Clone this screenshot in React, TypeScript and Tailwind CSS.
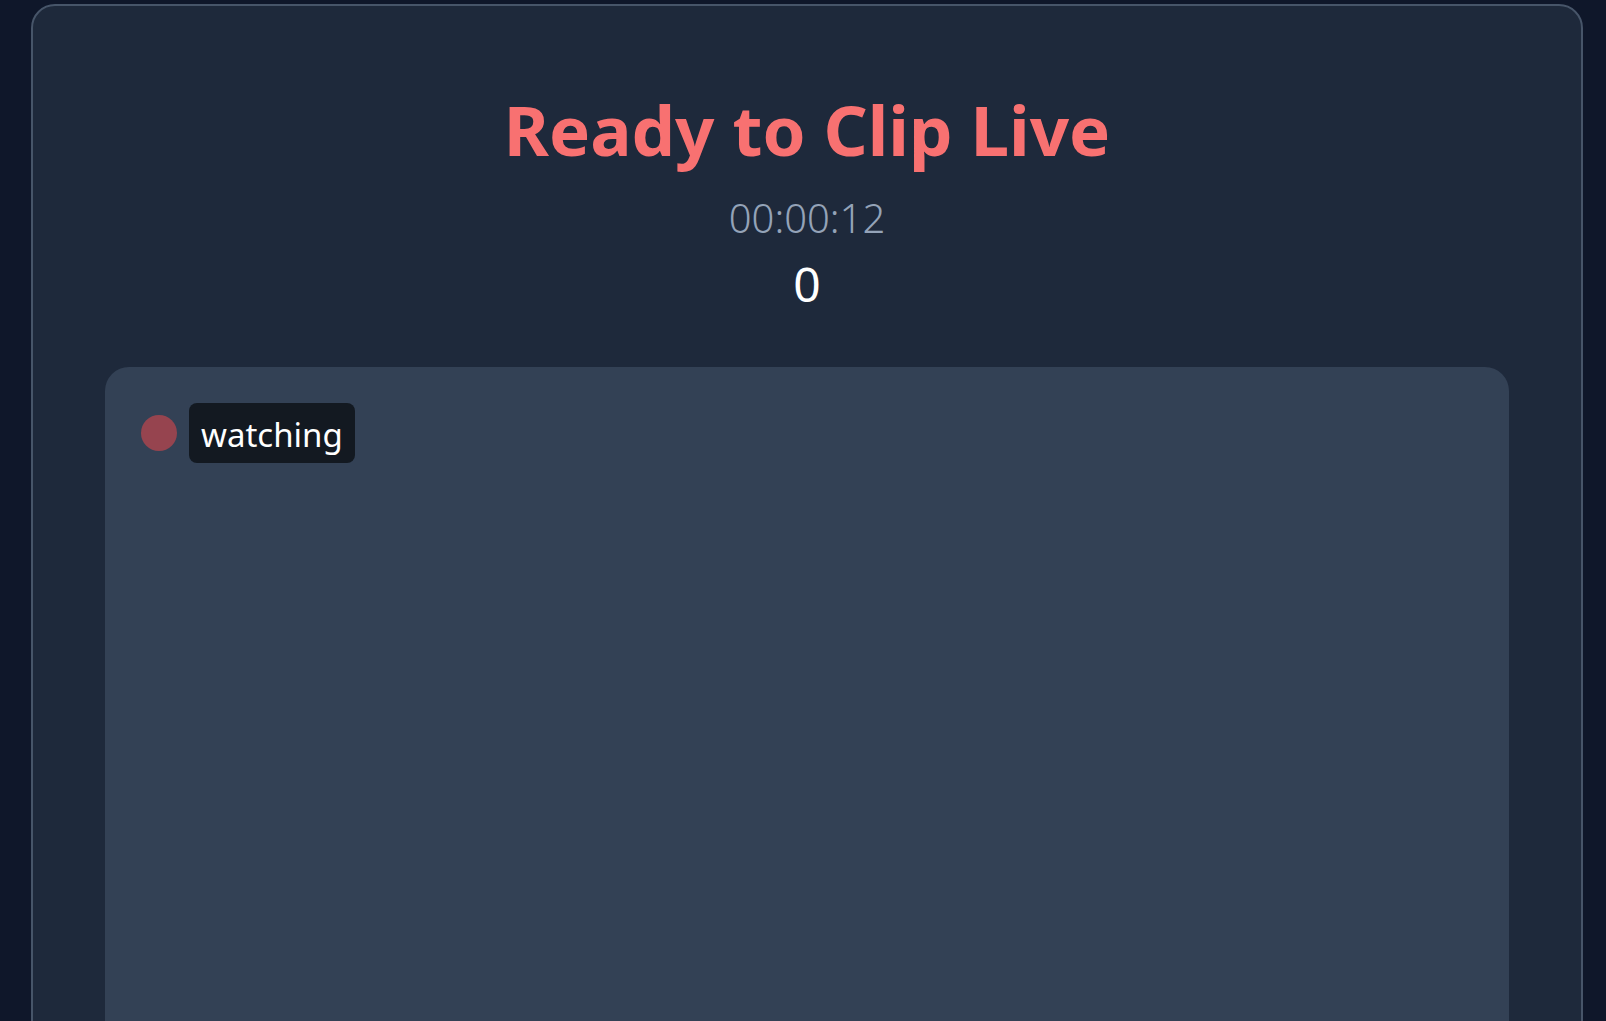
import React from "react";

export default function App() {
  const font = { fontFamily: '"Noto Sans", "Open Sans", sans-serif' };
  return (
    <div
      className="h-[1021px] overflow-hidden bg-[#0f172a] pt-1 pl-[31px] pr-[23px]"
      style={font}
    >
      <div className="rounded-3xl border-2 border-[#475569] bg-[#1e293b] px-[72px] pt-[89px] pb-[72px]">
        <div className="flex flex-col items-center">
          <h1 className="text-[69px] font-bold leading-none text-[#f87171]">
            Ready to Clip Live
          </h1>
          <div className="mt-[34px] text-[40px] font-light leading-none text-[#94a3b8]">
            00:00:12
          </div>
          <div className="mt-[22px] text-[48px] leading-none text-white">0</div>
        </div>
        <div className="mt-[59px] h-[800px] rounded-3xl bg-[#334155] p-9">
          <div className="flex items-center gap-3">
            <span className="h-9 w-9 rounded-full bg-[#96444f]" />
            <span className="rounded-lg bg-[#131921] px-3 pt-[12px] pb-[8px] text-[33px] leading-[40px] text-white">
              watching
            </span>
          </div>
        </div>
      </div>
    </div>
  );
}
